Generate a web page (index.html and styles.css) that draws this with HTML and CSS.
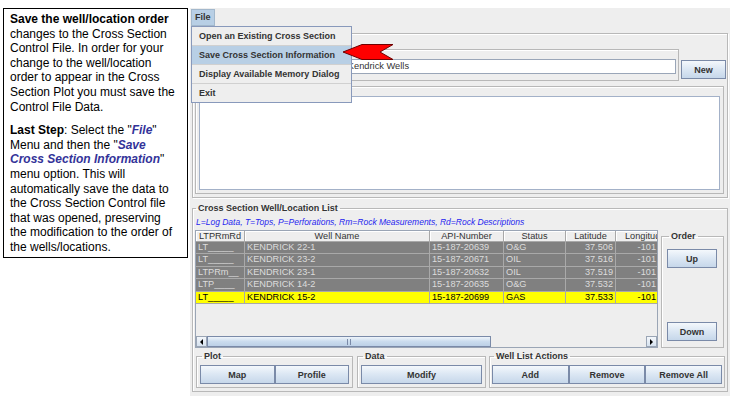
FILE: index.html
```html
<!DOCTYPE html>
<html lang="en">
<head>
    <meta charset="UTF-8">
    <title>Cross Section Well/Location List</title>
    <link rel="stylesheet" href="styles.css">
</head>
<body>
<div class="page">
    <div class="note">
        <p><b>Save the well/location order</b> changes to the Cross Section Control File. In order for your change to the well/location order to appear in the Cross Section Plot you must save the Control File Data.</p>
        <p><b>Last Step</b>: Select the "<b class="hl">File</b>" Menu and then the "<b class="hl">Save Cross Section Information</b>" menu option. This will automatically save the data to the Cross Section Control file that was opened, preserving the modification to the order of the wells/locations.</p>
    </div>

    <div class="app">
        <div class="menubar"><span class="menu">File</span></div>

        <div class="popup">
            <div class="item">Open an Existing Cross Section</div>
            <div class="item sel">Save Cross Section Information</div>
            <div class="item">Display Available Memory Dialog</div>
            <div class="item">Exit</div>
        </div>

        <svg class="arrow" width="54" height="18" viewBox="0 0 54 18">
            <polygon points="1,9 20,1.5 51,1.5 38,9 51,16.5 20,16.5" fill="#ff0000" stroke="#700000" stroke-width="1"/>
        </svg>

        <div class="main">
            <div class="panel top">
                <div class="title-row">
                    <fieldset class="group title-box">
                        <legend>Cross Section Title</legend>
                        <div class="field">Hugoton Field Cross Section of the Kendrick Wells</div>
                    </fieldset>
                    <button class="btn new">New</button>
                </div>
                <fieldset class="group desc">
                    <legend>Description</legend>
                    <div class="textarea"></div>
                </fieldset>
            </div>

            <fieldset class="group list">
                <legend>Cross Section Well/Location List</legend>
                <div class="key">L=Log Data, T=Tops, P=Perforations, Rm=Rock Measurements, Rd=Rock Descriptions</div>
                <div class="list-body">
                    <div class="pane">
                        <div class="table-wrap">
                            <table class="wells">
                                <colgroup>
                                    <col style="width:49px"><col style="width:185px"><col style="width:74px">
                                    <col style="width:62px"><col style="width:50px"><col style="width:41px">
                                </colgroup>
                                <thead>
                                    <tr><th>LTPRmRd</th><th>Well Name</th><th>API-Number</th><th>Status</th><th>Latitude</th><th class="cut">Longitude</th></tr>
                                </thead>
                                <tbody>
                                    <tr class="gray"><td>LT_____</td><td>KENDRICK 22-1</td><td>15-187-20639</td><td>O&amp;G</td><td class="num">37.506</td><td class="num">-101</td></tr>
                                    <tr class="gray"><td>LT_____</td><td>KENDRICK 23-2</td><td>15-187-20671</td><td>OIL</td><td class="num">37.516</td><td class="num">-101</td></tr>
                                    <tr class="gray"><td>LTPRm__</td><td>KENDRICK 23-1</td><td>15-187-20632</td><td>OIL</td><td class="num">37.519</td><td class="num">-101</td></tr>
                                    <tr class="gray"><td>LTP____</td><td>KENDRICK 14-2</td><td>15-187-20635</td><td>O&amp;G</td><td class="num">37.532</td><td class="num">-101</td></tr>
                                    <tr class="hot"><td>LT_____</td><td>KENDRICK 15-2</td><td>15-187-20699</td><td>GAS</td><td class="num">37.533</td><td class="num">-101</td></tr>
                                </tbody>
                            </table>
                        </div>
                        <div class="hscroll">
                            <div class="sb-btn"><span class="tri-left"></span></div>
                            <div class="sb-thumb"><span class="grip"></span></div>
                            <div class="sb-track"></div>
                            <div class="sb-btn"><span class="tri-right"></span></div>
                        </div>
                    </div>
                    <fieldset class="group order">
                        <legend>Order</legend>
                        <div class="order-body">
                            <button class="btn">Up</button>
                            <button class="btn">Down</button>
                        </div>
                    </fieldset>
                </div>

                <div class="actions">
                    <fieldset class="group plot">
                        <legend>Plot</legend>
                        <div class="btn-row"><button class="btn">Map</button><button class="btn">Profile</button></div>
                    </fieldset>
                    <fieldset class="group data">
                        <legend>Data</legend>
                        <div class="btn-row"><button class="btn">Modify</button></div>
                    </fieldset>
                    <fieldset class="group wl">
                        <legend>Well List Actions</legend>
                        <div class="btn-row"><button class="btn">Add</button><button class="btn">Remove</button><button class="btn">Remove All</button></div>
                    </fieldset>
                </div>
            </fieldset>
        </div>
    </div>
</div>
</body>
</html>
```

FILE: styles.css
```css
* {
    box-sizing: border-box;
}
body {
    margin: 0;
    background: #fff;
    font-family: "Liberation Sans", Arial, sans-serif;
}
.page {
    display: flex;
    align-items: flex-start;
    gap: 2px;
    padding: 8px 0 0 3px;
}

/* help note on the left */
.note {
    width: 185px;
    height: 250px;
    border: 1px solid #000;
    padding: 3px 9px 3px 6px;
    font-size: 12px;
    line-height: 14.6px;
    color: #000;
}
.note p {
    margin: 0 0 9px;
}
.note .hl {
    color: #333399;
    font-style: italic;
}

/* the swing window */
.app {
    position: relative;
    width: 540px;
    height: 388px;
    background: #eeeeee;
    font-size: 9px;
    color: #333;
}
.menubar {
    height: 18px;
    padding-top: 1px;
    display: flex;
}
.menu {
    margin-left: 1px;
    padding: 0 3px;
    height: 17px;
    line-height: 15px;
    font-weight: bold;
    border: 1px solid #a3b8cc;
    background: #b8cfe5;
}
.popup {
    position: absolute;
    left: 1px;
    top: 18px;
    width: 161px;
    border: 1px solid #8899bb;
    background: #eeeeee;
    z-index: 2;
}
.item {
    height: 19px;
    line-height: 18px;
    padding-left: 7px;
    font-weight: bold;
    border-top: 1px solid #d0d0d0;
}
.item:first-child {
    height: 18px;
    border-top: none;
}
.item.sel {
    background: #b8cfe5;
}
.arrow {
    position: absolute;
    left: 152px;
    top: 35px;
    z-index: 3;
}

.main {
    padding: 7px 2px 0;
}
.panel {
    border: 1px solid #b8b8b8;
    box-shadow: inset 1px 1px 0 #fff, 1px 1px 0 #fff;
}
.top {
    height: 165px;
    padding: 10px 1px 2px 2px;
}
.group {
    margin: 0;
    padding: 0;
    min-width: 0;
    border: 1px solid #b8b8b8;
    box-shadow: inset 1px 1px 0 #fff;
}
.group legend {
    margin-left: 2px;
    padding: 0 2px;
    font-size: 9px;
    font-weight: bold;
    line-height: 10px;
    color: #333;
}
.title-row {
    display: flex;
    gap: 2px;
}
.title-box {
    width: 484px;
    padding: 5px 2px 6px 1px;
}
.field {
    height: 15px;
    border: 1px solid #9aa6b8;
    background: #fff;
    padding-left: 3px;
    font-size: 9.3px;
    line-height: 13px;
    white-space: nowrap;
    overflow: hidden;
}
.new {
    width: 45px;
    margin-top: 16px;
}
.desc {
    margin-right: 2px;
    padding: 5px 3px 3px;
}
.textarea {
    height: 94px;
    border: 1px solid #a3b1c8;
    background: #fff;
}

/* well list */
.list {
    margin-top: 5px;
    padding: 4px 0 3px;
}
.list > legend {
    margin-left: 3px;
}
.key {
    padding-left: 3px;
    font-size: 8.5px;
    font-style: italic;
    line-height: 11px;
    color: #2626ee;
    margin-bottom: 2px;
    white-space: nowrap;
}
.list-body {
    display: flex;
    align-items: flex-start;
    padding-left: 2px;
}
.pane {
    width: 463px;
    height: 118px;
    border: 1px solid #9aa5b5;
    background: #eeeeee;
    display: flex;
    flex-direction: column;
}
.table-wrap {
    flex: 1;
    overflow: hidden;
}
.wells {
    width: 461px;
    table-layout: fixed;
    border-collapse: separate;
    border-spacing: 0;
    font-size: 9.2px;
}
.wells th {
    height: 11px;
    padding: 0;
    font-weight: normal;
    line-height: 10px;
    color: #333;
    background: #eeeeee;
    border-right: 1px solid #a8a8a8;
    border-bottom: 1px solid #a8a8a8;
    box-shadow: inset 1px 1px 0 #fff;
    white-space: nowrap;
    overflow: hidden;
}
.wells th.cut {
    text-align: left;
    padding-left: 9px;
    border-right: none;
}
.wells td {
    padding: 0 2px;
    line-height: 11.4px;
    border-right: 1px solid #a9a9a9;
    border-bottom: 1px solid #a9a9a9;
    white-space: nowrap;
    overflow: hidden;
}
.wells td:last-child {
    border-right: none;
    padding-right: 1px;
}
.wells td.num {
    text-align: right;
}
.gray td {
    background: #808080;
    color: #dcdcdc;
}
.hot td {
    background: #ffff00;
    color: #000;
}

.hscroll {
    height: 11px;
    display: flex;
}
.sb-btn {
    width: 11px;
    border: 1px solid #9aa5b5;
    background: linear-gradient(#f4f7fb, #d6e2ef);
    display: flex;
    align-items: center;
    justify-content: center;
}
.tri-left {
    border-top: 3px solid transparent;
    border-bottom: 3px solid transparent;
    border-right: 3px solid #000;
}
.tri-right {
    border-top: 3px solid transparent;
    border-bottom: 3px solid transparent;
    border-left: 3px solid #000;
}
.sb-thumb {
    width: 284px;
    border: 1px solid #7a8aa8;
    background: linear-gradient(#eef4fa, #cbdcee 50%, #bcd0e6);
    display: flex;
    align-items: center;
    justify-content: center;
}
.grip {
    width: 4px;
    height: 6px;
    border-left: 1px solid #7a8aa8;
    border-right: 1px solid #7a8aa8;
}
.sb-track {
    flex: 1;
    background: #eeeeee;
}

.order {
    width: 63px;
    margin: 1px 0 0 3px;
    padding: 8px 5px 6px;
}
.order-body {
    height: 92px;
    display: flex;
    flex-direction: column;
    justify-content: space-between;
}
.order .btn {
    width: 50px;
}

.btn {
    height: 19px;
    padding: 0;
    border: 1px solid #7a8aa8;
    background: linear-gradient(#f4f8fc, #dde8f4 45%, #c6d7ea);
    font-family: "Liberation Sans", Arial, sans-serif;
    font-size: 9px;
    font-weight: bold;
    color: #333;
}

.actions {
    display: flex;
    margin: 3px 0 0 3px;
}
.plot {
    width: 157px;
    padding: 4px 3px 3px;
}
.data {
    width: 129px;
    margin-left: 4px;
    padding: 4px 3px 3px;
}
.wl {
    width: 236px;
    margin-left: 3px;
    padding: 4px 2px 3px;
}
.btn-row {
    display: flex;
}
.btn-row .btn {
    flex: 1;
}
```
